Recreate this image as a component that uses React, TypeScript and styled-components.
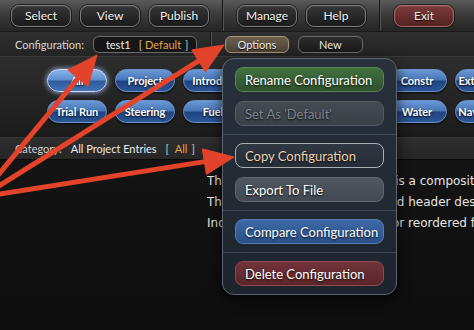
import styled, { createGlobalStyle, css } from "styled-components"

const GlobalStyle = createGlobalStyle`
  html, body {
    margin: 0;
    padding: 0;
    background: #121212;
  }
  body {
    font-family: Lato, "Liberation Sans", sans-serif;
    overflow: hidden;
  }
  * {
    box-sizing: border-box;
  }
`

const Screen = styled.div`
  position: relative;
  width: 474px;
  height: 330px;
  overflow: hidden;
  display: flex;
  flex-direction: column;
  background: #121212;
`

const TopBar = styled.div`
  height: 31px;
  flex: none;
  display: flex;
  align-items: center;
  padding-left: 11px;
  background: linear-gradient(#5a5a5a, #3c3c3c 45%, #252525);
`

const ButtonGroup = styled.div`
  display: flex;
  align-items: center;
  gap: 9px;
`

const Divider = styled.div`
  align-self: stretch;
  width: 2px;
  margin: 0 13px;
  border-left: 1px solid #171717;
  border-right: 1px solid #555;
`

const ToolButton = styled.button<{ $tone?: "exit" }>`
  width: 60px;
  height: 22px;
  padding: 0;
  border-radius: 8px;
  border: 1px solid #7c7c7c;
  background: linear-gradient(#363636, #1b1b1b);
  box-shadow: 0 0 0 1px rgba(0, 0, 0, 0.55), inset 0 1px 0 rgba(255, 255, 255, 0.08);
  color: #f4f4f4;
  font: 12px Lato, "Liberation Sans", sans-serif;
  text-shadow: 0 1px 1px #000;

  ${(p) =>
    p.$tone === "exit" &&
    css`
      border-color: #a86b6b;
      background: linear-gradient(#7c3a3a, #552222);
    `}
`

const ConfigBar = styled.div`
  height: 25px;
  flex: none;
  display: flex;
  align-items: center;
  padding-left: 15px;
  background: linear-gradient(#303030, #242424);
  border-top: 1px solid #1a1a1a;
`

const ConfigLabel = styled.span`
  font-size: 11px;
  color: #d6d6d6;
  margin-right: 9px;
`

const ConfigField = styled.div`
  width: 104px;
  height: 17px;
  display: flex;
  align-items: center;
  padding-left: 12px;
  border-radius: 6px;
  border: 1px solid #6a6a6a;
  background: #161616;
  font-size: 11px;
  color: #ececec;
  white-space: nowrap;
`

const Bracket = styled.span`
  color: #c8c8c8;
  margin-left: 8px;
`

const Accent = styled.span`
  color: #e3a446;
  padding: 0 4px 0 3px;
`

const BarButton = styled.button<{ $tone?: "options" }>`
  width: 65px;
  height: 17px;
  padding: 0;
  border-radius: 6px;
  border: 1px solid #6c6c6c;
  background: linear-gradient(#2c2c2c, #1a1a1a);
  color: #f0f0f0;
  font: 11px Lato, "Liberation Sans", sans-serif;
  text-shadow: 0 1px 1px #000;

  ${(p) =>
    p.$tone === "options" &&
    css`
      width: 64px;
      border-color: #a69478;
      background: linear-gradient(#6c604e, #4b4134);
    `}
`

const PillArea = styled.div`
  height: 81px;
  flex: none;
  padding: 12px 0 0 47px;
  border-top: 1px solid #3a3a3a;
  background: linear-gradient(#2d2d2d, #1e1e1e 85%, #1a1a1a);
`

const PillGrid = styled.div`
  display: grid;
  grid-template-columns: repeat(7, 60px);
  grid-auto-rows: 23px;
  gap: 8px;
`

const Pill = styled.div<{ $active?: boolean }>`
  display: flex;
  align-items: center;
  justify-content: center;
  overflow: hidden;
  white-space: nowrap;
  border-radius: 12px;
  border: 1px solid #6d92c9;
  background: linear-gradient(#6b98d6 0%, #4675b6 48%, #1f4380 52%, #2c5697 100%);
  box-shadow: 0 1px 2px rgba(0, 0, 0, 0.8);
  color: #fff;
  font-weight: 700;
  font-size: 11px;
  text-shadow: 0 1px 2px #000;

  ${(p) =>
    p.$active &&
    css`
      border-color: #cfe0ff;
      background: linear-gradient(#8ab3ea 0%, #5d8dcf 48%, #2f5a9c 52%, #4272b5 100%);
      box-shadow: 0 0 5px 1px rgba(170, 200, 255, 0.7);
    `}
`

const CategoryBar = styled.div`
  height: 23px;
  flex: none;
  display: flex;
  align-items: center;
  gap: 9px;
  padding-left: 15px;
  background: linear-gradient(#2e2e2e, #262626);
  border-top: 1px solid #383838;
  border-bottom: 1px solid #0a0a0a;
  font-size: 11px;
  color: #cfcfcf;
`

const CategoryValue = styled.span`
  color: #ececec;
`

const Body = styled.div`
  flex: 1;
  display: grid;
  grid-template-columns: 207px 1fr;
  background: linear-gradient(#141414, #0d0d0d);
`

const EntryList = styled.div``

const Description = styled.div`
  padding-top: 11px;
  font-family: "DejaVu Sans", "Liberation Sans", sans-serif;
  font-size: 12px;
  line-height: 21px;
  color: #e4e4e4;
  white-space: nowrap;
  overflow: hidden;
`

const Menu = styled.div`
  position: absolute;
  left: 222px;
  top: 58px;
  width: 175px;
  display: flex;
  flex-direction: column;
  border-radius: 12px;
  border: 1px solid #5c6570;
  background: linear-gradient(#28313c, #1d242d);
  box-shadow: 0 4px 14px rgba(0, 0, 0, 0.7);
`

const MenuSection = styled.div`
  display: flex;
  flex-direction: column;
  gap: 9px;
  padding: 8px 12px 8px 12px;

  & + & {
    border-top: 1px solid #3d4753;
  }
`

type Tone = "rename" | "disabled" | "copy" | "export" | "compare" | "delete"

const tones: Record<Tone, { bg: string; border: string; color: string }> = {
  rename: { bg: "linear-gradient(#43703f, #2d512c)", border: "#5a8656", color: "#fff" },
  disabled: { bg: "linear-gradient(#454b53, #3a4048)", border: "#555c64", color: "#80868c" },
  copy: { bg: "linear-gradient(#2f3742, #262d37)", border: "#a9aeb4", color: "#efd4b0" },
  export: { bg: "linear-gradient(#4f5761, #424952)", border: "#5f6771", color: "#fff" },
  compare: { bg: "linear-gradient(#3d6aa8, #2a4f86)", border: "#527cb3", color: "#fff" },
  delete: { bg: "linear-gradient(#71343a, #5a2529)", border: "#8b4b50", color: "#fff" },
}

const MenuItem = styled.div<{ $tone: Tone }>`
  height: 25px;
  display: flex;
  align-items: center;
  padding-left: 9px;
  border-radius: 8px;
  border: 1px solid ${(p) => tones[p.$tone].border};
  background: ${(p) => tones[p.$tone].bg};
  color: ${(p) => tones[p.$tone].color};
  font-size: 13px;
  text-shadow: 0 1px 2px rgba(0, 0, 0, 0.9);
  white-space: nowrap;
`

const Overlay = styled.svg`
  position: absolute;
  inset: 0;
  width: 474px;
  height: 330px;
  pointer-events: none;
`

type Pt = [number, number]

const arrows: { from: Pt; to: Pt }[] = [
  { from: [-6, 180], to: [97, 55] },
  { from: [-6, 189], to: [224, 45] },
  { from: [-6, 195], to: [234, 157] },
]

function Arrow({ from, to }: { from: Pt; to: Pt }) {
  const dx = to[0] - from[0]
  const dy = to[1] - from[1]
  const len = Math.hypot(dx, dy)
  const ux = dx / len
  const uy = dy / len
  const headLen = 30
  const half = 13
  const bx = to[0] - ux * headLen
  const by = to[1] - uy * headLen
  const points = [
    `${to[0]},${to[1]}`,
    `${bx - uy * half},${by + ux * half}`,
    `${bx + uy * half},${by - ux * half}`,
  ].join(" ")
  return (
    <g fill="#e4432b" stroke="#e4432b">
      <line x1={from[0]} y1={from[1]} x2={bx + ux * 2} y2={by + uy * 2} strokeWidth={5} />
      <polygon points={points} strokeWidth={1} strokeLinejoin="round" />
    </g>
  )
}

const pills = [
  "All", "Project", "Introduc", "Design", "Layout", "Constr", "Extensions",
  "Trial Run", "Steering", "Fuel", "Engine", "Electric", "Water", "Navigation",
]

export default function App() {
  return (
    <>
      <GlobalStyle />
      <Screen>
        <TopBar>
          <ButtonGroup>
            <ToolButton>Select</ToolButton>
            <ToolButton>View</ToolButton>
            <ToolButton>Publish</ToolButton>
          </ButtonGroup>
          <Divider />
          <ButtonGroup>
            <ToolButton>Manage</ToolButton>
            <ToolButton>Help</ToolButton>
          </ButtonGroup>
          <Divider />
          <ButtonGroup>
            <ToolButton $tone="exit">Exit</ToolButton>
          </ButtonGroup>
        </TopBar>

        <ConfigBar>
          <ConfigLabel>Configuration:</ConfigLabel>
          <ConfigField>
            test1
            <Bracket>
              [<Accent>Default</Accent>]
            </Bracket>
          </ConfigField>
          <Divider />
          <ButtonGroup>
            <BarButton $tone="options">Options</BarButton>
            <BarButton>New</BarButton>
          </ButtonGroup>
        </ConfigBar>

        <PillArea>
          <PillGrid>
            {pills.map((label, i) => (
              <Pill key={label} $active={i === 0}>{label}</Pill>
            ))}
          </PillGrid>
        </PillArea>

        <CategoryBar>
          <span>Category:</span>
          <CategoryValue>All Project Entries</CategoryValue>
          <span>
            [ <Accent as="span">All</Accent>]
          </span>
        </CategoryBar>

        <Body>
          <EntryList />
          <Description>
            <div>The All Project Entries list view is a composite of every category.</div>
            <div>The table shows entry name and header description for each item.</div>
            <div>Individual items can be added or reordered from the list.</div>
          </Description>
        </Body>

        <Menu>
          <MenuSection>
            <MenuItem $tone="rename">Rename Configuration</MenuItem>
            <MenuItem $tone="disabled">Set As 'Default'</MenuItem>
          </MenuSection>
          <MenuSection>
            <MenuItem $tone="copy">Copy Configuration</MenuItem>
            <MenuItem $tone="export">Export To File</MenuItem>
          </MenuSection>
          <MenuSection>
            <MenuItem $tone="compare">Compare Configuration</MenuItem>
          </MenuSection>
          <MenuSection>
            <MenuItem $tone="delete">Delete Configuration</MenuItem>
          </MenuSection>
        </Menu>

        <Overlay viewBox="0 0 474 330">
          {arrows.map((a, i) => (
            <Arrow key={i} from={a.from} to={a.to} />
          ))}
        </Overlay>
      </Screen>
    </>
  )
}
